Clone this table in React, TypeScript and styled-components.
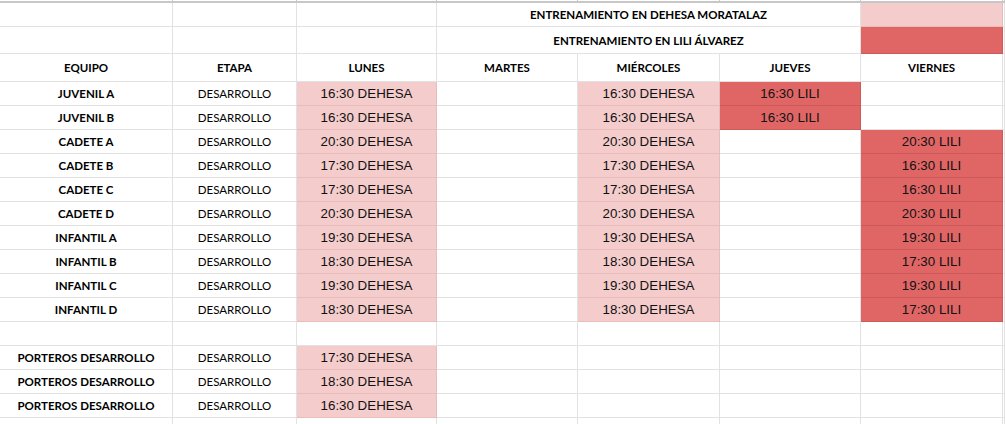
import * as React from 'react';
import styled, { createGlobalStyle, css } from 'styled-components';

type Fill = 'dehesa' | 'lili' | undefined;

interface Slot {
  text: string;
  fill: Fill;
}

interface Row {
  team: string;
  stage: string;
  days: (Slot | null)[];
}

const palette = {
  grid: '#e2e2e2',
  gridDark: '#c7c7c7',
  dehesa: '#f4cccc',
  dehesaLine: '#e9bcbc',
  lili: '#e06666',
  liliLine: '#cc5a5a',
  text: '#000000',
};

const dehesa = (t: string): Slot => ({ text: `${t} DEHESA`, fill: 'dehesa' });
const lili = (t: string): Slot => ({ text: `${t} LILI`, fill: 'lili' });

const teams: Row[] = [
  { team: 'JUVENIL A', stage: 'DESARROLLO', days: [dehesa('16:30'), null, dehesa('16:30'), lili('16:30'), null] },
  { team: 'JUVENIL B', stage: 'DESARROLLO', days: [dehesa('16:30'), null, dehesa('16:30'), lili('16:30'), null] },
  { team: 'CADETE A', stage: 'DESARROLLO', days: [dehesa('20:30'), null, dehesa('20:30'), null, lili('20:30')] },
  { team: 'CADETE B', stage: 'DESARROLLO', days: [dehesa('17:30'), null, dehesa('17:30'), null, lili('16:30')] },
  { team: 'CADETE C', stage: 'DESARROLLO', days: [dehesa('17:30'), null, dehesa('17:30'), null, lili('16:30')] },
  { team: 'CADETE D', stage: 'DESARROLLO', days: [dehesa('20:30'), null, dehesa('20:30'), null, lili('20:30')] },
  { team: 'INFANTIL A', stage: 'DESARROLLO', days: [dehesa('19:30'), null, dehesa('19:30'), null, lili('19:30')] },
  { team: 'INFANTIL B', stage: 'DESARROLLO', days: [dehesa('18:30'), null, dehesa('18:30'), null, lili('17:30')] },
  { team: 'INFANTIL C', stage: 'DESARROLLO', days: [dehesa('19:30'), null, dehesa('19:30'), null, lili('19:30')] },
  { team: 'INFANTIL D', stage: 'DESARROLLO', days: [dehesa('18:30'), null, dehesa('18:30'), null, lili('17:30')] },
];

const keepers: Row[] = ['17:30', '18:30', '16:30'].map(t => ({
  team: 'PORTEROS DESARROLLO',
  stage: 'DESARROLLO',
  days: [dehesa(t), null, null, null, null],
}));

const dayNames = ['LUNES', 'MARTES', 'MIÉRCOLES', 'JUEVES', 'VIERNES'];

const GlobalStyle = createGlobalStyle`
  html, body {
    margin: 0;
    padding: 0;
    background: #ffffff;
  }
  body {
    font-family: 'Lato', 'Liberation Sans', sans-serif;
    color: ${palette.text};
  }
`;

const Sheet = styled.div`
  display: grid;
  width: 1005px;
  height: 424px;
  overflow: hidden;
  grid-template-columns: 173px 124px 140px 141px 142px 141px 142px 1fr;
  grid-template-rows: 3px 24px 27px 28px repeat(15, 24px);
  background: #ffffff;
`;

const Cell = styled.div<{ $fill?: Fill; $span?: number; $top?: boolean }>`
  box-sizing: border-box;
  display: flex;
  align-items: center;
  justify-content: center;
  border-right: 1px solid ${palette.grid};
  border-bottom: 1px solid ${palette.grid};
  white-space: nowrap;
  overflow: hidden;
  ${p => p.$span && css`grid-column: span ${p.$span};`}
  ${p =>
    p.$top &&
    css`
      border-bottom: 2px solid ${palette.gridDark};
      border-right-color: ${palette.gridDark};
    `}
  ${p =>
    p.$fill === 'dehesa' &&
    css`
      background: ${palette.dehesa};
      border-color: ${palette.dehesaLine};
    `}
  ${p =>
    p.$fill === 'lili' &&
    css`
      background: ${palette.lili};
      border-color: ${palette.liliLine};
    `}
`;

const Label = styled.span<{ $bold?: boolean }>`
  font-family: 'Lato', 'Liberation Sans', sans-serif;
  font-size: 11.5px;
  font-weight: ${p => (p.$bold ? 700 : 400)};
  line-height: 1;
  padding-top: 1px;
`;

const Time = styled.span`
  font-family: 'Liberation Sans', Arial, sans-serif;
  font-size: 13.33px;
  color: #111111;
  line-height: 1;
  padding-top: 1px;
`;

const Blank = ({ n = 1, top }: { n?: number; top?: boolean }) => (
  <>
    {Array.from({ length: n }).map((_, i) => (
      <Cell key={i} $top={top} />
    ))}
  </>
);

const DataRow = ({ row }: { row: Row }) => (
  <>
    <Cell>
      <Label $bold>{row.team}</Label>
    </Cell>
    <Cell>
      <Label>{row.stage}</Label>
    </Cell>
    {row.days.map((slot, i) =>
      slot ? (
        <Cell key={i} $fill={slot.fill}>
          <Time>{slot.text}</Time>
        </Cell>
      ) : (
        <Cell key={i} />
      )
    )}
    <Cell />
  </>
);

const App: React.FC = () => {
  return (
    <>
      <GlobalStyle />
      <Sheet>
        <Blank n={8} top />

        <Blank n={3} />
        <Cell $span={3}>
          <Label $bold>ENTRENAMIENTO EN DEHESA MORATALAZ</Label>
        </Cell>
        <Cell $fill="dehesa" />
        <Cell />

        <Blank n={3} />
        <Cell $span={3}>
          <Label $bold>ENTRENAMIENTO EN LILI ÁLVAREZ</Label>
        </Cell>
        <Cell $fill="lili" />
        <Cell />

        <Cell>
          <Label $bold>EQUIPO</Label>
        </Cell>
        <Cell>
          <Label $bold>ETAPA</Label>
        </Cell>
        {dayNames.map(d => (
          <Cell key={d}>
            <Label $bold>{d}</Label>
          </Cell>
        ))}
        <Cell />

        {teams.map(r => (
          <DataRow key={r.team} row={r} />
        ))}

        <Blank n={8} />

        {keepers.map((r, i) => (
          <DataRow key={i} row={r} />
        ))}

        <Blank n={8} />
      </Sheet>
    </>
  );
};

export default App;
